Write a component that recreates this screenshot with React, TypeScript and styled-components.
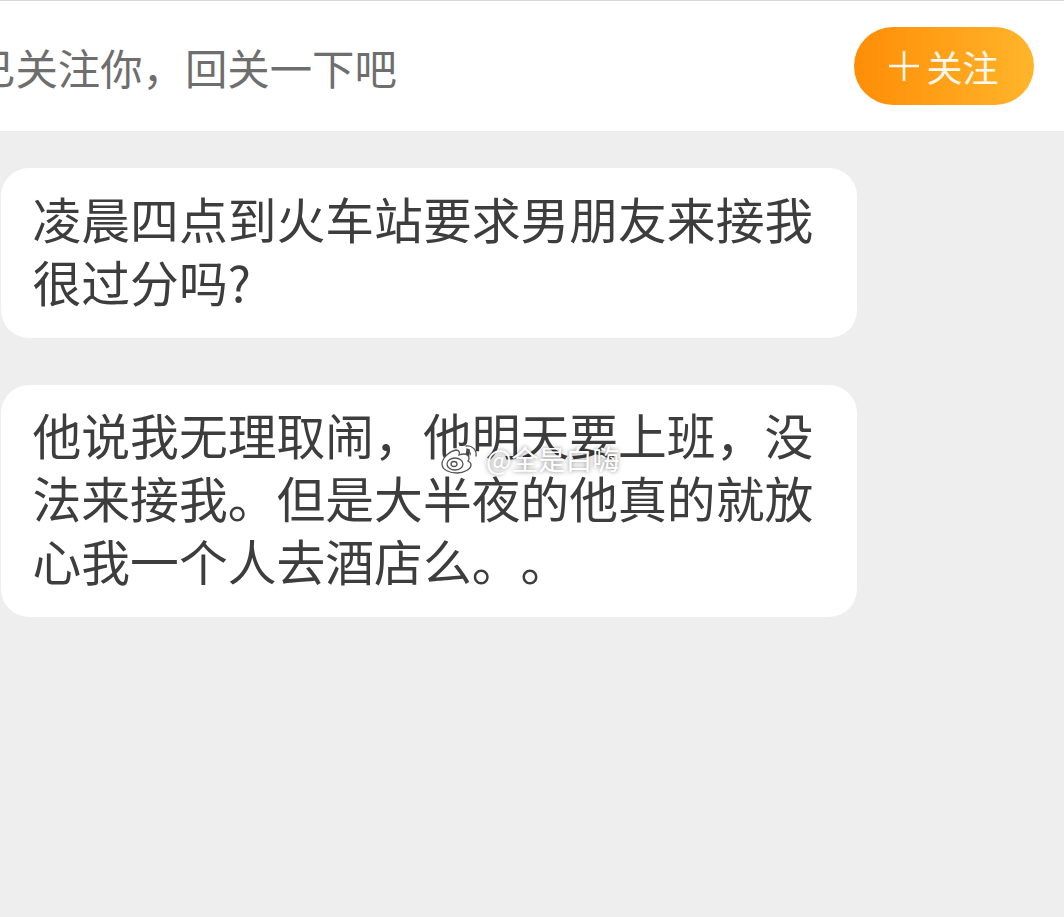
import React from "react";
import styled, { createGlobalStyle } from "styled-components";

const Global = createGlobalStyle`
  html, body { margin: 0; padding: 0; background: #eeeeee; }
  body { font-family: "Noto Sans CJK SC", "Liberation Sans", sans-serif; text-spacing-trim: space-all; }
`;

const Page = styled.div`
  position: relative;
  width: 1064px;
  height: 917px;
  overflow: hidden;
  background: #eeeeee;
`;

const FollowBar = styled.header`
  box-sizing: border-box;
  height: 132px;
  background: #ffffff;
  border-top: 1px solid #d8d8d8;
  border-bottom: 1px solid #ececec;
  display: flex;
  align-items: center;
  justify-content: space-between;
  padding-right: 30px;
`;

const Prompt = styled.div`
  margin-left: -27px;
  margin-top: 2px;
  font-size: 42.4px;
  line-height: 60px;
  font-weight: 400;
  color: #6e6e6e;
  white-space: nowrap;
`;

const FollowButton = styled.button`
  width: 180px;
  height: 78px;
  margin-top: 0;
  border: 0;
  border-radius: 39px;
  padding: 0;
  background: linear-gradient(90deg, #ff8d06 0%, #ffb52b 100%);
  color: #fff9ee;
  font: inherit;
  font-size: 36px;
  font-weight: 400;
  line-height: 78px;
  display: flex;
  align-items: center;
  justify-content: center;
  gap: 7px;
`;

const PlusIcon = styled.svg`
  width: 30px;
  height: 30px;
  display: block;
`;

const Thread = styled.main`
  display: flex;
  flex-direction: column;
  align-items: flex-start;
  gap: 47px;
  padding: 36px 0 0 1px;
`;

const Bubble = styled.p`
  box-sizing: border-box;
  width: 856px;
  margin: 0;
  padding: 17.5px 30px 26px 31.5px;
  background: #ffffff;
  border-radius: 28px;
  font-size: 48.8px;
  line-height: 63px;
  font-weight: 400;
  color: #3d3d3d;
`;

const Watermark = styled.div`
  position: absolute;
  left: 441px;
  top: 444px;
  display: flex;
  align-items: center;
  gap: 8px;
  color: #ffffff;
  font-size: 27px;
  line-height: 30px;
  text-shadow: 0 0 4px rgba(0, 0, 0, 0.5);
  white-space: nowrap;
`;

const WeiboMark = styled.svg`
  width: 37px;
  height: 30px;
  display: block;
  flex: none;
`;

export default function App() {
  return (
    <Page>
      <Global />
      <FollowBar>
        <Prompt>已关注你，回关一下吧</Prompt>
        <FollowButton>
          <PlusIcon viewBox="0 0 30 30" aria-hidden="true">
            <path d="M0 15H30M15 0V30" stroke="#fff9ee" strokeWidth="2.6" fill="none" />
          </PlusIcon>
          <span>关注</span>
        </FollowButton>
      </FollowBar>
      <Thread>
        <Bubble>凌晨四点到火车站要求男朋友来接我很过分吗?</Bubble>
        <Bubble>他说我无理取闹，他明天要上班，没法来接我。但是大半夜的他真的就放心我一个人去酒店么。。</Bubble>
      </Thread>
      <Watermark>
        <WeiboMark viewBox="0 0 37 30" aria-hidden="true">
          <g fill="#ffffff" stroke="#555555" strokeWidth="1.3">
            <path d="M1 20c0-6 8-13 14-14 3 0 4 2 3 5 5-2 10-1 10 3 0 1 0 2-1 3 2 1 3 2 3 4 0 4-7 8-14 8S1 26 1 20z" />
            <ellipse cx="14" cy="20" rx="8" ry="6" fill="none" />
            <ellipse cx="13" cy="20" rx="3" ry="2.5" fill="none" />
            <path d="M25 2c6-1 11 4 10 10M26 7c2 0 4 2 3 4" fill="none" strokeLinecap="round" />
          </g>
        </WeiboMark>
        <span>@全是白嗨</span>
      </Watermark>
    </Page>
  );
}
